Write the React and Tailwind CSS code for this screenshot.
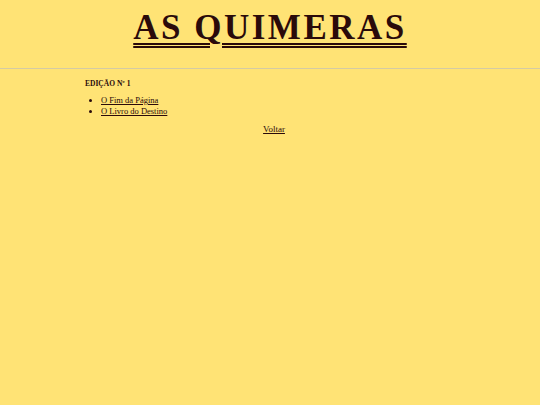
import React from 'react';

const stories = ['O Fim da Página', 'O Livro do Destino'];

const App = () => {
  return (
    <div className="min-h-[405px] bg-[#ffe375] text-[#2a0a0a] font-['Liberation_Serif',serif]">
      <header className="pt-[8px] pb-[20px] text-center">
        <h1 className="text-[35px] leading-[40px] font-bold tracking-[2.5px] underline decoration-double decoration-[2px] underline-offset-[4px]">
          AS QUIMERAS
        </h1>
      </header>
      <hr className="border-t border-[#d4cba4]" />
      <main className="w-[386px] mx-auto pl-[8px] pt-[9px] text-[8.5px]">
        <h2 className="font-bold text-[7.5px] leading-[12px]">EDIÇÃO Nº 1</h2>
        <ul className="list-disc pl-[16px] mt-[5px] leading-[11px]">
          {stories.map((s) => (
            <li key={s}>
              <a href="#" className="underline">{s}</a>
            </li>
          ))}
        </ul>
        <p className="text-center mt-[6px] text-[9px]">
          <a href="#" className="underline">Voltar</a>
        </p>
      </main>
    </div>
  );
};

export default App;
